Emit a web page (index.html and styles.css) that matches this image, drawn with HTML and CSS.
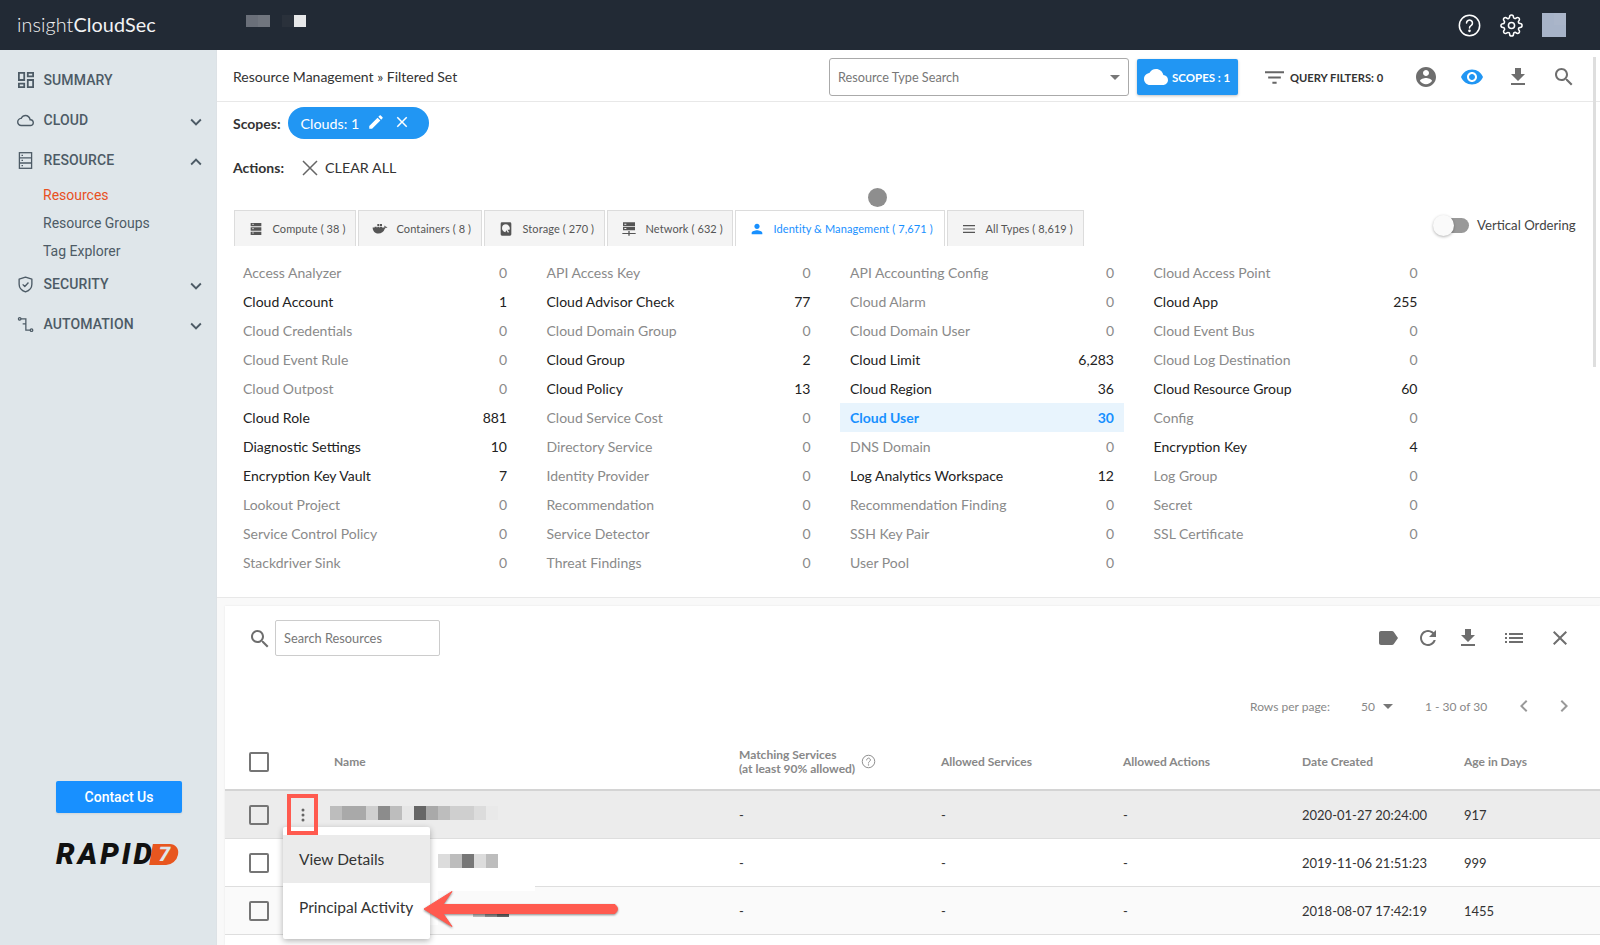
FILE: index.html
```html
<!DOCTYPE html>
<html lang="en">
<head>
<meta charset="utf-8">
<title>insightCloudSec</title>
<link rel="stylesheet" href="styles.css">
</head>
<body>
<svg class="defs" width="0" height="0" aria-hidden="true">
  <symbol id="i-down" viewBox="0 0 24 24"><path d="M16.59 8.59L12 13.17 7.41 8.59 6 10l6 6 6-6z"/></symbol>
  <symbol id="i-up" viewBox="0 0 24 24"><path d="M12 8l-6 6 1.41 1.41L12 10.83l4.59 4.58L18 14z"/></symbol>
  <symbol id="i-close" viewBox="0 0 24 24"><path d="M19 6.41L17.59 5 12 10.59 6.41 5 5 6.41 10.59 12 5 17.59 6.41 19 12 13.41 17.59 19 19 17.59 13.41 12z"/></symbol>
  <symbol id="i-dl" viewBox="0 0 24 24"><path d="M19 9h-4V3H9v6H5l7 7 7-7zM5 18v2h14v-2H5z"/></symbol>
  <symbol id="i-search" viewBox="0 0 24 24"><path d="M15.5 14h-.79l-.28-.27C15.41 12.59 16 11.11 16 9.5 16 5.91 13.09 3 9.5 3S3 5.91 3 9.5 5.91 16 9.5 16c1.61 0 3.09-.59 4.23-1.57l.27.28v.79l5 4.99L20.49 19l-4.99-5zm-6 0C7.01 14 5 11.99 5 9.5S7.01 5 9.5 5 14 7.01 14 9.5 11.99 14 9.5 14z"/></symbol>
</svg>

<header class="topbar">
  <div class="logo"><span class="logo-thin">insight</span>CloudSec</div>
  <div class="redact-top"><i class="rt a"></i><i class="rt b"></i><i class="rt gap"></i><i class="rt c"></i><i class="rt d"></i></div>
  <div class="top-icons">
    <svg class="ti" viewBox="0 0 24 24" fill="none" stroke="#fff" stroke-width="1.6"><circle cx="12" cy="12" r="10.6"/><path d="M8.9 9.4a3.1 3.1 0 1 1 4.7 2.7c-1 .6-1.6 1.2-1.6 2.5" stroke-linecap="round"/><circle cx="12" cy="17.6" r=".6" fill="#fff"/></svg>
    <svg class="ti" viewBox="0 0 24 24" fill="none" stroke="#fff" stroke-width="1.6" stroke-linejoin="round"><circle cx="12" cy="12" r="3.2"/><path d="M19.4 15a1.65 1.65 0 0 0 .33 1.82l.06.06a2 2 0 0 1 0 2.83 2 2 0 0 1-2.83 0l-.06-.06a1.65 1.65 0 0 0-1.82-.33 1.65 1.65 0 0 0-1 1.51V21a2 2 0 0 1-2 2 2 2 0 0 1-2-2v-.09A1.65 1.65 0 0 0 9 19.4a1.65 1.65 0 0 0-1.82.33l-.06.06a2 2 0 0 1-2.83 0 2 2 0 0 1 0-2.83l.06-.06a1.65 1.65 0 0 0 .33-1.82 1.65 1.65 0 0 0-1.51-1H3a2 2 0 0 1-2-2 2 2 0 0 1 2-2h.09A1.65 1.65 0 0 0 4.6 9a1.65 1.65 0 0 0-.33-1.82l-.06-.06a2 2 0 0 1 0-2.83 2 2 0 0 1 2.83 0l.06.06a1.65 1.65 0 0 0 1.82.33H9a1.65 1.65 0 0 0 1-1.51V3a2 2 0 0 1 2-2 2 2 0 0 1 2 2v.09a1.65 1.65 0 0 0 1 1.51 1.65 1.65 0 0 0 1.82-.33l.06-.06a2 2 0 0 1 2.83 0 2 2 0 0 1 0 2.83l-.06.06a1.65 1.65 0 0 0-.33 1.82V9a1.65 1.65 0 0 0 1.51 1H21a2 2 0 0 1 2 2 2 2 0 0 1-2 2h-.09a1.65 1.65 0 0 0-1.51 1z"/></svg>
    <div class="avatar"><i class="avatar-notch"></i></div>
  </div>
</header>

<div class="shell">
  <aside class="sidebar">
    <nav class="nav">
      <div class="nav-item nav-summary">
        <svg class="nav-ic nav-ic-dash" viewBox="3 3 18 18"><path d="M19 5v2h-4V5h4M9 5v6H5V5h4m10 8v6h-4v-6h4M9 17v2H5v-2h4M21 3h-8v6h8V3zM11 3H3v10h8V3zm10 8h-8v10h8V11zm-10 4H3v6h8v-6z"/></svg>
        <span class="nav-label">SUMMARY</span>
      </div>
      <div class="nav-item">
        <svg class="nav-ic" viewBox="0 0 24 24"><path d="M12 6c2.62 0 4.88 1.86 5.39 4.43l.3 1.5 1.53.11c1.56.1 2.78 1.41 2.78 2.96 0 1.65-1.35 3-3 3H6c-2.21 0-4-1.79-4-4 0-2.05 1.53-3.76 3.56-3.97l1.07-.11.5-.95C8.08 7.14 9.94 6 12 6m0-2C9.11 4 6.6 5.64 5.35 8.04 2.34 8.36 0 10.91 0 14c0 3.31 2.69 6 6 6h13c2.76 0 5-2.24 5-5 0-2.64-2.05-4.78-4.65-4.96C18.67 6.59 15.64 4 12 4z"/></svg>
        <span class="nav-label">CLOUD</span>
        <svg class="nav-chev"><use href="#i-down"/></svg>
      </div>
      <div class="nav-item">
        <svg class="nav-ic nav-ic-s" viewBox="0 0 17 17" stroke="#4d5b66" stroke-width="1.3"><rect x="2.4" y=".7" width="12.200" height="15.600"/><path d="M2.400 5.800h12.200M2.400 11h12.200"/><path d="M4.500 3.300h1.500M4.500 8.400h1.500M4.500 13.700h1.500"/></svg>
        <span class="nav-label">RESOURCE</span>
        <svg class="nav-chev"><use href="#i-up"/></svg>
      </div>
      <div class="nav-subs">
        <div class="nav-sub nav-sub-on">Resources</div>
        <div class="nav-sub">Resource Groups</div>
        <div class="nav-sub">Tag Explorer</div>
      </div>
      <div class="nav-item nav-security">
        <svg class="nav-ic nav-ic-s" viewBox="0 0 24 24" stroke="#4d5b66" stroke-width="1.9" stroke-linejoin="round"><path d="M12 1.500l9 3v7c0 5.200-3.800 9-9 11-5.200-2-9-5.800-9-11v-7z"/><path d="M8 11.800l3 3 5.200-5.600"/></svg>
        <span class="nav-label">SECURITY</span>
        <svg class="nav-chev"><use href="#i-down"/></svg>
      </div>
      <div class="nav-item">
        <svg class="nav-ic nav-ic-s" viewBox="0 0 24 24" stroke="#4d5b66" stroke-width="1.800"><circle cx="3.800" cy="4" r="1.800"/><circle cx="20.500" cy="20" r="1.800"/><path d="M5.600 4h6.900v16h6.200M8 11h4.500"/></svg>
        <span class="nav-label">AUTOMATION</span>
        <svg class="nav-chev"><use href="#i-down"/></svg>
      </div>
    </nav>
    <div class="side-foot">
      <button class="contact">Contact Us</button>
      <div class="rapid">RAPID<span class="rapid-7"><span class="rapid-7-num">7</span></span></div>
    </div>
  </aside>

  <main class="content">
    <div class="scrollbar"></div>
    <div class="toolbar">
      <div class="crumb">Resource Management » Filtered Set</div>
      <div class="type-select"><span>Resource Type Search</span><i class="caret"></i></div>
      <button class="scopes-btn">
        <svg class="scopes-cloud" viewBox="0 0 24 24"><path d="M19.35 10.04C18.67 6.59 15.64 4 12 4 9.11 4 6.6 5.64 5.35 8.04 2.34 8.36 0 10.91 0 14c0 3.31 2.69 6 6 6h13c2.76 0 5-2.24 5-5 0-2.64-2.05-4.78-4.65-4.96z"/></svg>
        SCOPES : 1
      </button>
      <div class="qf">
        <svg class="qf-ic" viewBox="3 5 18 14"><path d="M10 18h4v-2h-4v2zM3 6v2h18V6H3zm3 7h12v-2H6v2z"/></svg>
        <span>QUERY FILTERS: 0</span>
      </div>
      <div class="tb-icons">
        <svg class="tb-ic" viewBox="0 0 24 24"><path d="M12 2C6.48 2 2 6.48 2 12s4.48 10 10 10 10-4.48 10-10S17.52 2 12 2zm0 3c1.66 0 3 1.34 3 3s-1.34 3-3 3-3-1.34-3-3 1.34-3 3-3zm0 14.2c-2.5 0-4.71-1.28-6-3.22.03-1.99 4-3.08 6-3.08 1.99 0 5.97 1.09 6 3.08-1.29 1.94-3.5 3.22-6 3.22z"/></svg>
        <svg class="tb-ic tb-eye" viewBox="0 0 24 24"><path d="M12 4.5C7 4.5 2.73 7.61 1 12c1.73 4.39 6 7.5 11 7.5s9.27-3.11 11-7.5c-1.73-4.39-6-7.5-11-7.5zM12 17c-2.76 0-5-2.24-5-5s2.24-5 5-5 5 2.24 5 5-2.24 5-5 5zm0-8c-1.66 0-3 1.34-3 3s1.34 3 3 3 3-1.34 3-3-1.34-3-3-3z"/></svg>
        <svg class="tb-ic"><use href="#i-dl"/></svg>
        <svg class="tb-ic"><use href="#i-search"/></svg>
      </div>
    </div>

    <div class="filters">
      <div class="scope-row">
        <span class="f-label">Scopes:</span>
        <div class="chip">
          <span class="chip-text">Clouds: 1</span>
          <svg class="chip-edit" viewBox="0 0 24 24"><path d="M3 17.25V21h3.75L17.81 9.94l-3.75-3.75L3 17.25zM20.71 7.04c.39-.39.39-1.02 0-1.41l-2.34-2.34c-.39-.39-1.02-.39-1.41 0l-1.83 1.83 3.75 3.75 1.83-1.83z"/></svg>
          <svg class="chip-x"><use href="#i-close"/></svg>
        </div>
      </div>
      <div class="action-row">
        <span class="f-label">Actions:</span>
        <svg class="clear-x" viewBox="0 0 16 16"><path d="M1 1l14 14M15 1L1 15" stroke="#666" stroke-width="1.5" fill="none"/></svg>
        <span class="clear-text">CLEAR ALL</span>
      </div>
      <div class="dot"></div>
    </div>

    <div class="tabs-row">
      <div class="tabs">
        <div class="tab tab-1">
          <svg class="tab-ic" viewBox="0 0 24 24"><path d="M4 3h16v5H4zM4 9.5h16v5H4zM4 16h16v5H4z"/><path d="M6 5h3M6 11.5h3M6 18h3" stroke="#f4f4f4" stroke-width="1"/></svg>
          <span>Compute ( 38 )</span>
        </div>
        <div class="tab tab-2">
          <svg class="tab-ic" viewBox="0 0 24 24"><path d="M1 12h17c1 0 2-.8 2.2-2 1 .5 2.3.4 3-.4-.7-.8-1.7-1-2.6-.8-.3-1-1-1.6-1.6-2-.6.8-.8 2-.3 3H1c0 5 3 9 8.5 9 4.800 0 8-2.500 9.500-6.800z"/><path d="M4 8.500h3v3H4zM8 8.500h3v3H8zM12 8.500h3v3h-3zM8 4.500h3v3H8zM12 4.500h3v3h-3z"/></svg>
          <span>Containers ( 8 )</span>
        </div>
        <div class="tab tab-3">
          <svg class="tab-ic" viewBox="0 0 24 24"><path fill-rule="evenodd" d="M6 2h12a2 2 0 0 1 2 2v16a2 2 0 0 1-2 2H6a2 2 0 0 1-2-2V4a2 2 0 0 1 2-2zm6 3a6 6 0 0 0-6 6c0 3 2.200 5.500 5 5.900l1.500-2.900 2.500 3.500 1.500-1-2.300-3.400h3.100A6 6 0 0 0 12 5z"/></svg>
          <span>Storage ( 270 )</span>
        </div>
        <div class="tab tab-4">
          <svg class="tab-ic" viewBox="0 0 24 24"><path fill-rule="evenodd" d="M3 2h18v5.500H3zM3 8.500h18V14H3zM5 4v1.500h3V4zM5 10.500V12h3v-1.500zM11 15h2v3h9v1.500h-9V22h-2v-2.500H2V18h9z"/></svg>
          <span>Network ( 632 )</span>
        </div>
        <div class="tab tab-5 tab-on">
          <svg class="tab-ic" viewBox="0 0 24 24"><path d="M12 12c2.210 0 4-1.790 4-4s-1.790-4-4-4-4 1.790-4 4 1.790 4 4 4zm0 2c-2.670 0-8 1.340-8 4v2h16v-2c0-2.660-5.330-4-8-4z"/></svg>
          <span>Identity &amp; Management ( 7,671 )</span>
        </div>
        <div class="tab tab-6">
          <svg class="tab-ic" viewBox="0 0 24 24"><path d="M3 6h18v1.800H3zM3 11.100h18v1.800H3zM3 16.200h18V18H3z"/></svg>
          <span>All Types ( 8,619 )</span>
        </div>
      </div>
      <div class="vo">
        <div class="switch"><i class="switch-thumb"></i></div>
        <span>Vertical Ordering</span>
      </div>
    </div>

    <div class="types">
      <div class="t t0"><span>Access Analyzer</span><span>0</span></div>
      <div class="t t0"><span>API Access Key</span><span>0</span></div>
      <div class="t t0"><span>API Accounting Config</span><span>0</span></div>
      <div class="t t0"><span>Cloud Access Point</span><span>0</span></div>

      <div class="t"><span>Cloud Account</span><span>1</span></div>
      <div class="t"><span>Cloud Advisor Check</span><span>77</span></div>
      <div class="t t0"><span>Cloud Alarm</span><span>0</span></div>
      <div class="t"><span>Cloud App</span><span>255</span></div>

      <div class="t t0"><span>Cloud Credentials</span><span>0</span></div>
      <div class="t t0"><span>Cloud Domain Group</span><span>0</span></div>
      <div class="t t0"><span>Cloud Domain User</span><span>0</span></div>
      <div class="t t0"><span>Cloud Event Bus</span><span>0</span></div>

      <div class="t t0"><span>Cloud Event Rule</span><span>0</span></div>
      <div class="t"><span>Cloud Group</span><span>2</span></div>
      <div class="t"><span>Cloud Limit</span><span>6,283</span></div>
      <div class="t t0"><span>Cloud Log Destination</span><span>0</span></div>

      <div class="t t0"><span>Cloud Outpost</span><span>0</span></div>
      <div class="t"><span>Cloud Policy</span><span>13</span></div>
      <div class="t"><span>Cloud Region</span><span>36</span></div>
      <div class="t"><span>Cloud Resource Group</span><span>60</span></div>

      <div class="t"><span>Cloud Role</span><span>881</span></div>
      <div class="t t0"><span>Cloud Service Cost</span><span>0</span></div>
      <div class="t t-on"><span>Cloud User</span><span>30</span></div>
      <div class="t t0"><span>Config</span><span>0</span></div>

      <div class="t"><span>Diagnostic Settings</span><span>10</span></div>
      <div class="t t0"><span>Directory Service</span><span>0</span></div>
      <div class="t t0"><span>DNS Domain</span><span>0</span></div>
      <div class="t"><span>Encryption Key</span><span>4</span></div>

      <div class="t"><span>Encryption Key Vault</span><span>7</span></div>
      <div class="t t0"><span>Identity Provider</span><span>0</span></div>
      <div class="t"><span>Log Analytics Workspace</span><span>12</span></div>
      <div class="t t0"><span>Log Group</span><span>0</span></div>

      <div class="t t0"><span>Lookout Project</span><span>0</span></div>
      <div class="t t0"><span>Recommendation</span><span>0</span></div>
      <div class="t t0"><span>Recommendation Finding</span><span>0</span></div>
      <div class="t t0"><span>Secret</span><span>0</span></div>

      <div class="t t0"><span>Service Control Policy</span><span>0</span></div>
      <div class="t t0"><span>Service Detector</span><span>0</span></div>
      <div class="t t0"><span>SSH Key Pair</span><span>0</span></div>
      <div class="t t0"><span>SSL Certificate</span><span>0</span></div>

      <div class="t t0"><span>Stackdriver Sink</span><span>0</span></div>
      <div class="t t0"><span>Threat Findings</span><span>0</span></div>
      <div class="t t0"><span>User Pool</span><span>0</span></div>
    </div>

    <section class="card-wrap">
      <div class="card">
        <div class="card-tools">
          <svg class="search-ic"><use href="#i-search"/></svg>
          <div class="search-box">Search Resources</div>
          <div class="card-icons">
            <svg class="c-ic c-tag" viewBox="0 0 24 24"><path d="M17.630 5.840C17.270 5.330 16.670 5 16 5L5 5.010C3.900 5.010 3 5.900 3 7v10c0 1.100.9 1.990 2 1.990L16 19c.67 0 1.270-.33 1.630-.84L22 12l-4.370-6.160z"/></svg>
            <svg class="c-ic c-ref" viewBox="0 0 24 24"><path d="M17.650 6.350C16.200 4.900 14.210 4 12 4c-4.420 0-7.990 3.580-7.990 8s3.570 8 7.990 8c3.730 0 6.840-2.550 7.730-6h-2.080c-.82 2.330-3.040 4-5.650 4-3.310 0-6-2.690-6-6s2.690-6 6-6c1.660 0 3.140.69 4.220 1.780L13 11h7V4l-2.350 2.350z"/></svg>
            <svg class="c-ic c-dl"><use href="#i-dl"/></svg>
            <svg class="c-ic c-list" viewBox="0 0 24 24"><path d="M3 13h2v-2H3v2zm0 4h2v-2H3v2zm0-8h2V7H3v2zm4 4h14v-2H7v2zm0 4h14v-2H7v2zM7 7v2h14V7H7z"/></svg>
            <svg class="c-ic c-x"><use href="#i-close"/></svg>
          </div>
        </div>
        <div class="pager">
          <span class="pg-rows">Rows per page:</span>
          <span class="pg-50">50</span><i class="pg-caret"></i>
          <span class="pg-range">1 - 30 of 30</span>
          <svg class="pg-ch" viewBox="0 0 24 24"><path d="M15.410 7.410L14 6l-6 6 6 6 1.410-1.410L10.830 12z"/></svg>
          <svg class="pg-ch pg-next" viewBox="0 0 24 24"><path d="M10 6L8.590 7.410 13.170 12l-4.580 4.590L10 18l6-6z"/></svg>
        </div>
        <div class="thead">
          <div class="cb-cell"><i class="cb"></i></div>
          <div>Name</div>
          <div class="th-match"><span>Matching Services<br>(at least 90% allowed)</span>
            <svg class="th-help" viewBox="0 0 24 24" fill="none" stroke="#888" stroke-width="1.500"><circle cx="12" cy="12" r="10"/><path d="M9 9.500a3 3 0 1 1 4.500 2.600c-1 .6-1.500 1.200-1.500 2.400" stroke-linecap="round"/><circle cx="12" cy="17.500" r=".5"/></svg>
          </div>
          <div>Allowed Services</div>
          <div>Allowed Actions</div>
          <div>Date Created</div>
          <div>Age in Days</div>
        </div>
        <div class="row row-hover">
          <div class="cb-cell"><i class="cb"></i></div>
          <div class="name-cell"><div class="px-name"><i class="p s3"></i><i class="p s4"></i><i class="p s4"></i><i class="p s2"></i><i class="p s5"></i><i class="p s3"></i><i class="p s0"></i><i class="p s7"></i><i class="p s4"></i><i class="p s3"></i><i class="p s2"></i><i class="p s2"></i><i class="p s1"></i><i class="p s00"></i></div></div>
          <div>-</div><div>-</div><div>-</div>
          <div>2020-01-27 20:24:00</div><div>917</div>
        </div>
        <div class="row">
          <div class="cb-cell"><i class="cb"></i></div>
          <div class="name-cell"><div class="px-name px-two"><i class="p s4"></i><i class="p s1"></i><i class="p s3"></i><i class="p s6"></i><i class="p s1"></i><i class="p s3"></i></div></div>
          <div>-</div><div>-</div><div>-</div>
          <div>2019-11-06 21:51:23</div><div>999</div>
        </div>
        <div class="row row-alt">
          <div class="cb-cell"><i class="cb"></i></div>
          <div class="name-cell"><div class="px-name px-three"><i class="p s3"></i><i class="p s5"></i><i class="p s7"></i></div></div>
          <div>-</div><div>-</div><div>-</div>
          <div>2018-08-07 17:42:19</div><div>1455</div>
        </div>
      </div>
    </section>
  </main>
</div>

<div class="erase erase-a"></div>
<div class="erase erase-b"></div>
<div class="menu">
  <div class="menu-item menu-on">View Details</div>
  <div class="menu-item">Principal Activity</div>
</div>
<div class="kebab-box">
  <svg class="kebab" viewBox="0 0 4 16"><circle cx="2" cy="3" r="1.500"/><circle cx="2" cy="8" r="1.500"/><circle cx="2" cy="13" r="1.500"/></svg>
</div>
<svg class="arrow" viewBox="0 0 205 40" width="205" height="40">
  <path d="M5 20 L33 2.500 L24 15.500 L196 15.500 Q201 20 196 24.500 L24 24.500 L33 37.500 Z" fill="#ff5a4f" stroke="#ff5a4f" stroke-width="1" stroke-linejoin="round"/>
</svg>
</body>
</html>
```
FILE: styles.css
```css
* { box-sizing: border-box; }
html, body { margin: 0; height: 945px; overflow: hidden; }
body { font-family: Lato, "Open Sans", sans-serif; color: #333; background: #fff; position: relative; }
.defs { position: absolute; }
svg { display: block; flex: none; }

/* top bar */
.topbar { height: 50px; background: #222a35; display: flex; align-items: center; padding: 0 34px 0 17px; color: #fff; }
.logo { font-size: 19.800px; width: 229px; letter-spacing: .1px; color: #f2f3f4; margin-top: -2px; }
.logo-thin { font-weight: 300; }
.redact-top { display: flex; height: 12px; margin-top: -8px; }
.rt { display: block; width: 12px; height: 12px; }
.rt.a { background: #6a6f79; }
.rt.b { background: #70757e; }
.rt.gap { background: #222a35; width: 12px; }
.rt.c { background: #2a313b; }
.rt.d { background: #e7e8e9; }
.top-icons { margin-left: auto; display: flex; align-items: center; gap: 19px; }
.ti { width: 23px; height: 23px; }
.avatar { width: 24px; height: 24px; background: #a7b3c8; position: relative; margin-left: 0; }
.avatar-notch { position: absolute; right: 0; top: 0; width: 12px; height: 12px; background: #aab5c9; }

.shell { display: flex; height: 895px; }

/* sidebar */
.sidebar { width: 217px; flex: none; background: #dfe6ea; border-right: 1px solid #dde2e6; position: relative; font-family: Roboto, sans-serif; display: flex; flex-direction: column; }
.nav { padding-top: 10px; }
.nav-item { height: 40px; display: flex; align-items: center; padding-left: 17px; color: #4d5b66; }
.nav-ic { width: 17px; height: 17px; fill: #4d5b66; margin-right: 9.500px; }
.nav-ic-dash { width: 16px; height: 16px; margin-left: .5px; margin-right: 10px; }
.nav-ic-s { fill: none; }
.nav-label { font-size: 14px; font-weight: 500; flex: 1; letter-spacing: .1px; }
.nav-chev { width: 22px; height: 22px; fill: #4d5b66; margin-right: 9px; margin-top: 4px; }
.nav-subs { padding: 0 0 0 43px; margin-top: 1px; }
.nav-sub { height: 28px; line-height: 28px; font-size: 14px; color: #4d5b66; }
.nav-sub-on { color: #e8501f; }
.nav-security { margin-top: -1px; }
.side-foot { margin-top: auto; padding: 0 0 78px 56px; }
.contact { width: 126px; height: 32px; background: #1890ff; color: #fff; border: 0; border-radius: 2px; font: 500 14px Roboto, sans-serif; display: block; box-shadow: 0 1px 2px rgba(0,0,0,.08); }
.rapid { margin-top: 28px; display: flex; align-items: center; height: 26px; font: italic 900 29.500px/26px Roboto, sans-serif; color: #111; letter-spacing: 3px; white-space: nowrap; }
.rapid-7 { width: 27px; height: 21px; margin-left: -4px; background: #e8561f; border-radius: 0 10px 10px 0; transform: skewX(-10deg); display: flex; align-items: center; justify-content: center; }
.rapid-7-num { font: 900 20px/21px Roboto, sans-serif; letter-spacing: 0; color: #dfe6ea; }

/* content */
.content { flex: 1; min-width: 0; position: relative; display: flex; flex-direction: column; }
.scrollbar { position: absolute; right: 4px; top: 7px; width: 3px; height: 310px; background: #dedede; }
.toolbar { height: 52px; flex: none; border-bottom: 1px solid #e8e8e8; display: flex; align-items: center; padding-left: 16px; padding-top: 3px; }
.crumb { font-size: 14px; color: #333; width: 596px; margin-top: -2px; }
.type-select { width: 300px; height: 38px; border: 1px solid #aaa; border-radius: 3px; display: flex; align-items: center; justify-content: space-between; padding: 0 8px 0 8px; font-size: 12.700px; color: #777; }
.caret { width: 0; height: 0; border: 5px solid transparent; border-top: 5px solid #777; border-bottom: 0; }
.scopes-btn { margin-left: 8px; width: 101px; height: 36px; background: #2196f3; color: #fff; border: 0; border-radius: 2px; font: 700 11.500px Lato, sans-serif; display: flex; align-items: center; gap: 4px; padding: 0 0 0 7px; box-shadow: 0 1px 3px rgba(0,0,0,.25); white-space: nowrap; }
.scopes-cloud { width: 24px; height: 24px; fill: #fff; }
.qf { margin-left: 27px; display: flex; align-items: center; gap: 6px; font-size: 11.200px; font-weight: 700; color: #333; width: 120px; white-space: nowrap; }
.qf-ic { width: 19px; height: 15px; fill: #666; }
.tb-icons { display: flex; gap: 22px; margin-left: 29px; }
.tb-ic { width: 24px; height: 24px; fill: #6e6e6e; }
.tb-eye { fill: #2196f3; }

.filters { height: 108px; flex: none; padding-left: 16px; position: relative; }
.f-label { font-size: 14px; font-weight: 700; color: #333; }
.scope-row { height: 32px; margin-top: 5px; display: flex; align-items: center; }
.chip { margin-left: 7px; width: 141px; height: 32px; border-radius: 16px; background: #2196f3; color: #fff; display: flex; align-items: center; padding-left: 13px; font-size: 14.300px; }
.chip-text { width: 66px; }
.chip-edit { width: 18px; height: 18px; fill: #fff; margin-top: -3px; }
.chip-x { width: 18px; height: 18px; fill: #fff; margin-left: 8px; margin-top: -3px; }
.action-row { display: flex; align-items: center; margin-top: 12px; height: 32px; }
.clear-x { width: 16px; height: 16px; margin-left: 18px; margin-right: 7px; margin-top: 2px; }
.clear-text { font-size: 14.300px; color: #333; }
.dot { position: absolute; left: 651px; top: 86px; width: 19px; height: 19px; border-radius: 50%; background: #8e8e8e; }

.tabs-row { display: flex; height: 36px; padding-left: 17px; flex: none; position: relative; }
.tabs { display: flex; gap: 2px; }
.tab { height: 36px; background: #f4f4f4; border: 1px solid #dcdcdc; border-bottom: 0; display: flex; align-items: center; font-size: 11px; color: #555; white-space: nowrap; padding-left: 13px; letter-spacing: .1px; }
.tab-ic { width: 16px; height: 16px; fill: #555; margin-right: 8.500px; }
.tab-1 { width: 122px; }
.tab-2 { width: 124px; }
.tab-3 { width: 121px; }
.tab-4 { width: 126px; }
.tab-5 { width: 210px; background: #fff; color: #1890ff; }
.tab-5 .tab-ic { fill: #1890ff; }
.tab-6 { width: 137px; }
.vo { position: absolute; left: 1218px; top: 7px; display: flex; align-items: center; font-size: 13.200px; color: #444; white-space: nowrap; }
.switch { width: 34px; height: 15px; border-radius: 8px; background: #999; position: relative; margin-right: 8px; }
.switch-thumb { position: absolute; left: -2px; top: -3px; width: 21px; height: 21px; border-radius: 50%; background: #fafafa; box-shadow: 0 1px 3px rgba(0,0,0,.3); }

.types { display: grid; grid-template-columns: repeat(4, 284px); column-gap: 19.500px; grid-auto-rows: 29px; padding: 12px 0 0 16px; height: 352px; flex: none; border-bottom: 1px solid #e8e8e8; }
.t { display: flex; justify-content: space-between; align-items: center; padding: 0 10px; font-size: 14px; color: #222; }
.t0 { color: #8a8a8a; }
.t-on { background: #e8f4fd; color: #1890ff; font-weight: 700; }

/* card */
.card-wrap { flex: 1; background: #f9f9f9; padding: 8px 0 0 8px; min-height: 0; }
.card { background: #fff; height: 100%; box-shadow: 0 0 2px rgba(0,0,0,.08); font-size: 14px; }
.card-tools { height: 64px; display: flex; align-items: center; padding-left: 23px; }
.search-ic { width: 24px; height: 24px; fill: #6e6e6e; margin-top: 1px; margin-right: 3px; }
.search-box { width: 165px; height: 36px; border: 1px solid #ccc; border-radius: 2px; line-height: 34px; padding-left: 8px; font-size: 12.800px; color: #777; }
.card-icons { margin-left: auto; display: flex; align-items: center; }
.c-ic { width: 24px; height: 24px; fill: #6e6e6e; }
.c-ref { margin-left: 16px; }
.c-dl { margin-left: 16px; }
.c-list { margin-left: 22px; }
.c-x { margin-left: 22px; margin-right: 28px; }
.pager { height: 32px; margin-top: 20px; display: flex; align-items: center; font-size: 12px; color: #888; padding-left: 1025px; }
.pg-rows { width: 111px; }
.pg-50 { width: 22px; }
.pg-caret { width: 0; height: 0; border: 5px solid transparent; border-top: 5px solid #777; border-bottom: 0; }
.pg-range { margin-left: 32px; width: 87px; }
.pg-ch { width: 24px; height: 24px; fill: #999; margin-left: 0; }
.pg-next { margin-left: 16px; }
.thead, .row { display: grid; grid-template-columns: 109px 405px 202px 182px 179px 162px 1fr; align-items: center; }
.thead { height: 69px; padding-top: 12px; border-bottom: 2px solid #d4d4d4; font-size: 12px; font-weight: 700; color: #888; }
.th-match { display: flex; align-items: center; gap: 6px; line-height: 14px; }
.th-help { width: 15px; height: 15px; }
.cb-cell { padding-left: 24px; }
.cb { display: block; width: 20px; height: 20px; border: 2px solid #757575; border-radius: 2px; }
.row { height: 48px; border-bottom: 1px solid #dedede; font-size: 13px; color: #333; }
.row-hover { background: #ececec; }
.row-alt { background: #fafafa; }
.name-cell { position: relative; height: 100%; }
.px-name { display: flex; position: absolute; left: -4px; top: 15px; }
.px-two { left: 92px; top: 15px; }
.px-three { left: 139px; top: 27px; }
.px-three .p { height: 3px; }
.p { display: block; width: 12px; height: 14px; }
.s00 { background: #e9e9e9; } .s0 { background: #e6e6e6; } .s1 { background: #dcdcdc; } .s2 { background: #cfcfcf; } .s3 { background: #bdbdbd; } .s4 { background: #a9a9a9; } .s5 { background: #8c8c8c; } .s6 { background: #777; } .s7 { background: #666; }

/* overlays */
.erase { position: absolute; background: #fff; }
.erase-a { left: 428px; top: 850px; width: 10px; height: 75px; }
.erase-b { left: 428px; top: 886px; width: 107px; height: 5px; }
.kebab-box { position: absolute; left: 287px; top: 794px; width: 31px; height: 41px; border: 4px solid #ff5a4f; display: flex; align-items: center; justify-content: center; }
.kebab { width: 4px; height: 16px; fill: #666; }
.menu { position: absolute; left: 283px; top: 827px; width: 147px; height: 112px; background: #fff; border-radius: 2px; box-shadow: 0 2px 6px rgba(0,0,0,.3); padding-top: 8px; font-size: 15.500px; color: #333; }
.menu-item { height: 48px; line-height: 48px; padding-left: 16px; }
.menu-on { background: #ebebeb; }
.arrow { position: absolute; left: 419px; top: 889px; filter: drop-shadow(0 1px 1px rgba(0,0,0,.45)); }
```
